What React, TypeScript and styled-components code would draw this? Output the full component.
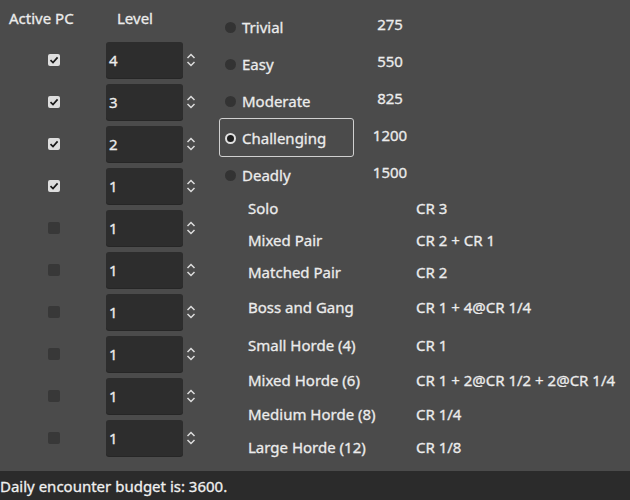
import React from 'react';
import styled, { createGlobalStyle } from 'styled-components';

const GlobalStyle = createGlobalStyle`
  html, body {
    margin: 0;
    padding: 0;
    background: #4b4b4b;
  }
  body {
    font-family: "Noto Sans", "Open Sans", sans-serif;
    color: #ececec;
    font-size: 15px;
    -webkit-text-stroke: 0.3px currentColor;
  }
`;

const levels = [4, 3, 2, 1, 1, 1, 1, 1, 1, 1];
const activeCount = 4;

const difficulties = [
  { name: 'Trivial', xp: '275' },
  { name: 'Easy', xp: '550' },
  { name: 'Moderate', xp: '825' },
  { name: 'Challenging', xp: '1200', selected: true },
  { name: 'Deadly', xp: '1500' },
];

const encounters = [
  ['Solo', 'CR 3'],
  ['Mixed Pair', 'CR 2 + CR 1'],
  ['Matched Pair', 'CR 2'],
  ['Boss and Gang', 'CR 1 + 4@CR 1/4'],
  ['Small Horde (4)', 'CR 1'],
  ['Mixed Horde (6)', 'CR 1 + 2@CR 1/2 + 2@CR 1/4'],
  ['Medium Horde (8)', 'CR 1/4'],
  ['Large Horde (12)', 'CR 1/8'],
];

const Page = styled.div`
  width: 630px;
  height: 500px;
  display: flex;
  flex-direction: column;
  overflow: hidden;
`;

const Main = styled.div`
  flex: 1;
  min-height: 0;
  display: flex;
  background: #4b4b4b;
`;

const PartyPanel = styled.div`
  width: 219px;
  flex-shrink: 0;
  display: grid;
  grid-template-columns: 106px 113px;
  grid-auto-rows: 42px;
  align-content: start;
`;

const HeaderCell = styled.div<{ $pad: number }>`
  height: 35px;
  padding-left: ${({ $pad }) => $pad}px;
  display: flex;
  align-items: center;
`;

const CheckCell = styled.div`
  display: flex;
  align-items: center;
  justify-content: center;
  padding-left: 2px;
  padding-bottom: 6px;
`;

const CheckBox = styled.span<{ $on: boolean }>`
  width: 12px;
  height: 12px;
  border-radius: 2px;
  background: ${({ $on }) => ($on ? '#dedede' : '#383838')};
  display: flex;
  align-items: center;
  justify-content: center;
`;

const SpinCell = styled.div`
  display: flex;
  align-items: flex-start;
  gap: 3px;
`;

const SpinInput = styled.div`
  width: 77px;
  height: 36px;
  box-sizing: border-box;
  border-radius: 3px;
  background: #2d2d2d;
  box-shadow: 0 1px 0 #262626;
  padding-left: 3px;
  display: flex;
  align-items: center;
`;

const SpinArrows = styled.div`
  height: 36px;
  display: flex;
  align-items: center;
`;

const RightPanel = styled.div`
  flex: 1;
  display: flex;
  flex-direction: column;
`;

const DifficultyList = styled.div`
  display: flex;
  flex-direction: column;
  padding-top: 8px;
`;

const DifficultyRow = styled.div`
  display: flex;
  align-items: center;
  height: 37px;
`;

const RadioItem = styled.div<{ $selected?: boolean }>`
  width: 135px;
  height: 39px;
  box-sizing: border-box;
  border: 1px solid ${({ $selected }) => ($selected ? '#d0d0d0' : 'transparent')};
  border-radius: 3px;
  display: flex;
  align-items: center;
  gap: 6px;
  padding-left: 5px;
  padding-top: 1px;
`;

const Radio = styled.span<{ $selected?: boolean }>`
  width: 11px;
  height: 11px;
  flex-shrink: 0;
  border-radius: 50%;
  box-sizing: border-box;
  background: ${({ $selected }) => ($selected ? '#1e1e1e' : '#333')};
  border: ${({ $selected }) => ($selected ? '2px solid #e0e0e0' : 'none')};
`;

const XpValue = styled.div`
  width: 70px;
  text-align: center;
  margin-left: 1px;
  margin-top: -5px;
`;

const EncounterGrid = styled.div`
  display: grid;
  grid-template-columns: 168px auto;
  grid-template-rows: 32px 32px 35px 38px 35px 34px 33px 33px;
  padding-left: 29px;
  padding-top: 5px;
`;

const EncounterCell = styled.div`
  display: flex;
  align-items: center;
  height: 20px;
`;

const Footer = styled.div`
  height: 29px;
  flex-shrink: 0;
  background: #2b2b2b;
  display: flex;
  align-items: center;
  color: #f0f0f0;
`;

const CheckMark = () => (
  <svg width="10" height="10" viewBox="0 0 10 10">
    <path d="M1.5 5.2 L4 7.6 L8.6 2.4" fill="none" stroke="#1a1a1a" strokeWidth="1.7" />
  </svg>
);

const Updown = () => (
  <svg width="10" height="16" viewBox="0 0 10 16">
    <path d="M1.5 6 L5 2.5 L8.5 6 M1.5 10 L5 13.5 L8.5 10" fill="none" stroke="#dcdcdc" strokeWidth="1.5" />
  </svg>
);

export default function App() {
  return (
    <>
      <GlobalStyle />
      <Page>
        <Main>
          <PartyPanel>
            <HeaderCell $pad={9}>Active PC</HeaderCell>
            <HeaderCell $pad={11}>Level</HeaderCell>
            {levels.map((lvl, i) => (
              <React.Fragment key={i}>
                <CheckCell>
                  <CheckBox $on={i < activeCount}>{i < activeCount && <CheckMark />}</CheckBox>
                </CheckCell>
                <SpinCell>
                  <SpinInput>{lvl}</SpinInput>
                  <SpinArrows>
                    <Updown />
                  </SpinArrows>
                </SpinCell>
              </React.Fragment>
            ))}
          </PartyPanel>
          <RightPanel>
            <DifficultyList>
              {difficulties.map((d) => (
                <DifficultyRow key={d.name}>
                  <RadioItem $selected={d.selected}>
                    <Radio $selected={d.selected} />
                    {d.name}
                  </RadioItem>
                  <XpValue>{d.xp}</XpValue>
                </DifficultyRow>
              ))}
            </DifficultyList>
            <EncounterGrid>
              {encounters.map(([label, cr]) => (
                <React.Fragment key={label}>
                  <EncounterCell>{label}</EncounterCell>
                  <EncounterCell>{cr}</EncounterCell>
                </React.Fragment>
              ))}
            </EncounterGrid>
          </RightPanel>
        </Main>
        <Footer>Daily encounter budget is: 3600.</Footer>
      </Page>
    </>
  );
}
